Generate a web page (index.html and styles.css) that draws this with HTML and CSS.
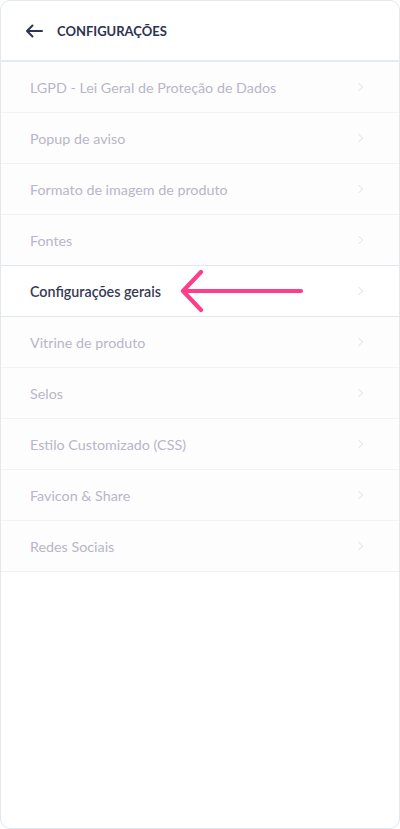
FILE: index.html
```html
<!DOCTYPE html>
<html lang="pt-BR">
<head>
<meta charset="utf-8">
<link rel="stylesheet" href="styles.css">
</head>
<body>
<div class="panel">
  <header class="header">
    <svg class="back" width="18" height="14" viewBox="0 0 18 14" aria-hidden="true">
      <path d="M17 7H2M7.5 1.5L2 7l5.5 5.5" fill="none" stroke="#2d3350" stroke-width="2" stroke-linecap="round" stroke-linejoin="round"/>
    </svg>
    <h1 class="title">CONFIGURAÇÕES</h1>
  </header>
  <ul class="menu">
    <li class="item"><span>LGPD - Lei Geral de Proteção de Dados</span><i class="chev"></i></li>
    <li class="item"><span>Popup de aviso</span><i class="chev"></i></li>
    <li class="item"><span>Formato de imagem de produto</span><i class="chev"></i></li>
    <li class="item before-active"><span>Fontes</span><i class="chev"></i></li>
    <li class="item active"><span>Configurações gerais</span><i class="chev"></i>
      <svg class="pointer" width="126" height="46" viewBox="0 0 126 46" aria-hidden="true">
        <path d="M122 23H4M22 4L4 23l18 19" fill="none" stroke="#fc3f88" stroke-width="4.2" stroke-linecap="round" stroke-linejoin="round"/>
      </svg>
    </li>
    <li class="item"><span>Vitrine de produto</span><i class="chev"></i></li>
    <li class="item"><span>Selos</span><i class="chev"></i></li>
    <li class="item"><span>Estilo Customizado (CSS)</span><i class="chev"></i></li>
    <li class="item"><span>Favicon &amp; Share</span><i class="chev"></i></li>
    <li class="item"><span>Redes Sociais</span><i class="chev"></i></li>
  </ul>
</div>
</body>
</html>
```
FILE: styles.css
```css
* { box-sizing: border-box; }
html, body { margin: 0; padding: 0; background: #ffffff; }
body { font-family: Lato, "Noto Sans", sans-serif; }

.panel {
  width: 400px;
  height: 829px;
  border: 1px solid #e2e8ec;
  border-radius: 10px;
  background: #fff;
  overflow: hidden;
}

.header {
  height: 61px;
  display: flex;
  align-items: center;
  padding-left: 24px;
  border-bottom: 2px solid #e6ebef;
}
.back { margin-right: 14px; margin-top: 1px; }
.title {
  margin: 0;
  font-size: 13px;
  font-weight: 700;
  color: #2d3350;
}

.menu { list-style: none; margin: 0; padding: 0; }
.item {
  position: relative;
  height: 51px;
  display: flex;
  align-items: center;
  justify-content: space-between;
  padding: 0 37px 0 29px;
  border-bottom: 1px solid #f1f2f4;
  background: #fdfdfd;
  font-size: 14.3px;
  color: #b8b6c8;
}
.item.before-active { border-bottom-color: #e3e6ea; }
.item.active {
  background: #fff;
  color: #363a55;
  font-weight: 600;
  border-bottom-color: #e3e6ea;
}
.chev {
  width: 6px; height: 6px;
  border-top: 1.6px solid #e1e8ec;
  border-right: 1.6px solid #e1e8ec;
  transform: rotate(45deg);
}
.pointer {
  position: absolute;
  left: 178px;
  top: 2px;
}
```
